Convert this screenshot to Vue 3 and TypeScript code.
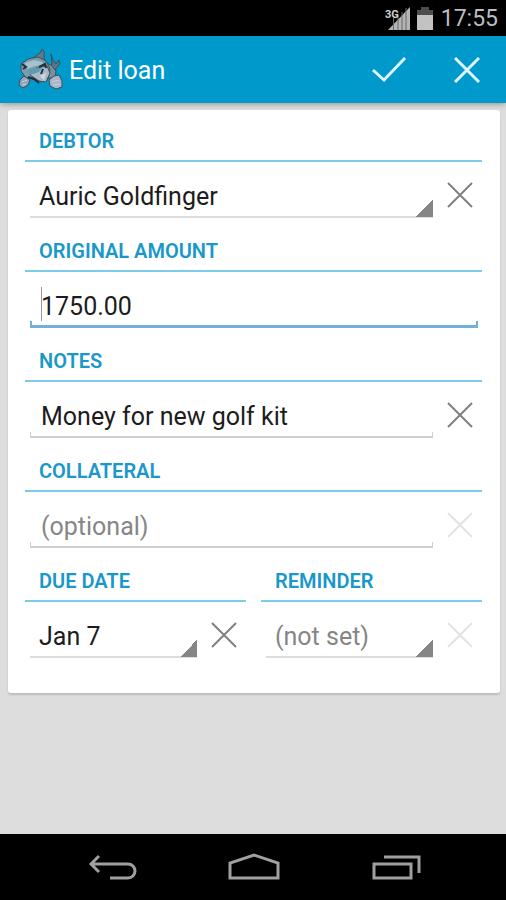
<script setup lang="ts">
import { ref } from 'vue'

const debtor = ref('Auric Goldfinger')
const amount = ref('1750.00')
const notes = ref('Money for new golf kit')
const collateral = ref('')
const dueDate = ref('Jan 7')
const reminder = ref('')
</script>

<template>
  <div class="screen">
    <div class="status-bar">
      <svg class="signal" width="26" height="26" viewBox="0 0 26 26" aria-hidden="true">
        <path d="M25 2V25H3Z" fill="#b5b5b5" />
        <path d="M8.500 12V25M13 10V25M17 7V25M21 3V25" stroke="#666" stroke-width="1" />
        <path d="M0 0H13V13H0Z" fill="#000" />
        <text x="0" y="13" class="network">3G</text>
      </svg>
      <svg class="battery" width="16" height="23" viewBox="0 0 16 23" aria-hidden="true">
        <path d="M4 0H12V3H16V8H0V3H4Z" fill="#4d4d4d" />
        <path d="M0 8H16V23H0Z" fill="#c2c2c2" />
      </svg>
      <time class="clock">17:55</time>
    </div>

    <header class="action-bar">
      <svg class="mascot" width="46" height="42" viewBox="0 0 46 42" aria-hidden="true">
        <g stroke="#3c4f5c" stroke-width="1" stroke-linejoin="round">
          <path d="M14 10 19 6 23 3 24 0 26 2 26 9 29 14 21 15Z" fill="#5f7a89" />
          <path d="M33 5 35 11 38 15 41 11 42 15 38 19 37 24 32 21 34 15Z" fill="#587686" />
          <path d="M26 13 33 16 38 22 37 29 29 29Z" fill="#7592a2" />
          <path d="M3 15 10 10 20 8 28 12 32 20 30 30 23 33 14 29 8 29 3 22Z" fill="#7d9cab" />
          <path d="M12 26 18 19 29 17 32 24 28 33 21 32Z" fill="#aab9c7" />
          <path d="M2 31 6 27 12 31 10 36 5 39 1 36Z" fill="#95a5ba" />
          <path d="M31 31 36 27 41 26 44 32 44 38 38 40 32 37Z" fill="#a8b5ca" />
        </g>
        <path d="M7 14 16 11 24 13 26 16 17 17 9 20Z" fill="#a3c2cd" />
        <path d="M9 22 16 19 25 18 21 23 12 26Z" fill="#5c9ab5" />
        <path d="M4 15 8 18 5 20M21 18 27 15 28 19M25 20 23 25M10 28 16 30 21 34" fill="none" stroke="#1f303c" stroke-width="2" />
        <path d="M22 27 28 24 26 31Z" fill="#d5d7df" />
        <path d="M4 33 9 31M4 36 8 35M34 33 41 31M35 36 42 35" stroke="#c8d0de" />
      </svg>
      <h1 class="title">Edit loan</h1>
      <button class="action" type="submit" form="loan" aria-label="Save">
        <svg width="36" height="30" viewBox="0 0 36 30" aria-hidden="true">
          <path d="M2 15 13 25 34 3" />
        </svg>
      </button>
      <button class="action" type="button" aria-label="Cancel">
        <svg width="26" height="26" viewBox="0 0 26 26" aria-hidden="true">
          <path d="M1 1 25 25M25 1 1 25" />
        </svg>
      </button>
    </header>

    <main class="content">
      <form id="loan" class="card" @submit.prevent>
        <section class="group">
          <label class="heading" for="debtor">DEBTOR</label>
          <div class="row">
            <select id="debtor" v-model="debtor" class="field spinner">
              <option>Auric Goldfinger</option>
            </select>
            <button class="clear" type="button" aria-label="Clear debtor" @click="debtor = ''">
              <svg width="26" height="26" viewBox="0 0 26 26" aria-hidden="true"><path d="M1 1 25 25M25 1 1 25" /></svg>
            </button>
          </div>
        </section>

        <section class="group">
          <label class="heading" for="amount">ORIGINAL AMOUNT</label>
          <div class="row caret">
            <input id="amount" v-model="amount" class="field edit active" type="text" inputmode="decimal" />
          </div>
        </section>

        <section class="group">
          <label class="heading" for="notes">NOTES</label>
          <div class="row">
            <input id="notes" v-model="notes" class="field edit" type="text" />
            <button class="clear" type="button" aria-label="Clear notes" @click="notes = ''">
              <svg width="26" height="26" viewBox="0 0 26 26" aria-hidden="true"><path d="M1 1 25 25M25 1 1 25" /></svg>
            </button>
          </div>
        </section>

        <section class="group">
          <label class="heading" for="collateral">COLLATERAL</label>
          <div class="row">
            <input id="collateral" v-model="collateral" class="field edit" type="text" placeholder="(optional)" />
            <button class="clear" type="button" aria-label="Clear collateral" :disabled="!collateral" @click="collateral = ''">
              <svg width="26" height="26" viewBox="0 0 26 26" aria-hidden="true"><path d="M1 1 25 25M25 1 1 25" /></svg>
            </button>
          </div>
        </section>

        <div class="pair">
          <section class="group">
            <label class="heading" for="due">DUE DATE</label>
            <div class="row">
              <select id="due" v-model="dueDate" class="field spinner">
                <option>Jan 7</option>
              </select>
              <button class="clear" type="button" aria-label="Clear due date" @click="dueDate = ''">
                <svg width="26" height="26" viewBox="0 0 26 26" aria-hidden="true"><path d="M1 1 25 25M25 1 1 25" /></svg>
              </button>
            </div>
          </section>
          <section class="group">
            <label class="heading" for="reminder">REMINDER</label>
            <div class="row">
              <select id="reminder" v-model="reminder" class="field spinner" :class="{ unset: !reminder }">
                <option value="">(not set)</option>
              </select>
              <button class="clear" type="button" aria-label="Clear reminder" :disabled="!reminder" @click="reminder = ''">
                <svg width="26" height="26" viewBox="0 0 26 26" aria-hidden="true"><path d="M1 1 25 25M25 1 1 25" /></svg>
              </button>
            </div>
          </section>
        </div>
      </form>
    </main>

    <nav class="nav-bar" aria-label="System">
      <button type="button" aria-label="Back">
        <svg width="56" height="34" viewBox="0 0 56 34" aria-hidden="true">
          <path d="M8 14H45A7 7 0 0 1 45 28H27M16 6 8 14 16 22" />
        </svg>
      </button>
      <button type="button" aria-label="Home">
        <svg width="56" height="34" viewBox="0 0 56 34" aria-hidden="true">
          <path d="M5 28V13L29 5 53 13V28Z" />
        </svg>
      </button>
      <button type="button" aria-label="Recent apps">
        <svg width="56" height="34" viewBox="0 0 56 34" aria-hidden="true">
          <path d="M7 14H44V28H7ZM17 7H52V23" />
        </svg>
      </button>
    </nav>
  </div>
</template>

<style>
body {
  margin: 0;
}
</style>

<style scoped>
.screen {
  display: flex;
  flex-direction: column;
  min-height: 100vh;
  background: #ddd;
  font-family: Roboto, "Liberation Sans", sans-serif;
}

button {
  display: flex;
  align-items: center;
  justify-content: center;
  margin: 0;
  padding: 0;
  border: 0;
  background: none;
}

svg {
  flex: none;
}

.status-bar {
  display: flex;
  align-items: center;
  justify-content: flex-end;
  height: 36px;
  padding-right: 8px;
  background: #000;
}

.signal {
  margin-right: 6px;
}

.network {
  font-size: 11px;
  font-weight: 700;
  fill: #d0d0d0;
}

.battery {
  margin-right: 8px;
}

.clock {
  padding-top: 2px;
  color: #bdbdbd;
  font-size: 23px;
  line-height: 34px;
}

.action-bar {
  display: flex;
  align-items: center;
  height: 67px;
  padding-left: 18px;
  background: #0099cc;
  box-shadow: 0 1px 6px rgba(0, 0, 0, 0.35);
}

.title {
  flex: 1;
  margin: 0 0 0 5px;
  padding-top: 2px;
  color: #fff;
  font-size: 25px;
  font-weight: 400;
  line-height: 32px;
}

.action {
  width: 78px;
  height: 67px;
}

.action path {
  fill: none;
  stroke: #dff5ff;
  stroke-width: 3;
}

.content {
  flex: 1;
  padding: 7px 6px 8px 8px;
}

.card {
  padding: 12px 18px 21px 17px;
  border-radius: 3px;
  background: #fff;
  box-shadow: 0 2px 2px rgba(0, 0, 0, 0.15);
}

.group {
  height: 110px;
}

.heading {
  display: block;
  box-sizing: border-box;
  height: 40px;
  padding-left: 14px;
  border-bottom: 2px solid #7ccbe8;
  color: #1a98ca;
  font-size: 20px;
  font-weight: 600;
  line-height: 38px;
}

.row {
  display: flex;
  align-items: center;
  padding: 10px 4px 0 5px;
}

.field {
  flex: 1;
  box-sizing: border-box;
  min-width: 0;
  height: 46px;
  margin: 0;
  border: 0;
  border-radius: 0;
  outline: none;
  background-color: transparent;
  color: #1c1c1c;
  font-family: inherit;
  font-size: 25px;
  line-height: 32px;
}

.spinner {
  appearance: none;
  padding: 4px 20px 0 9px;
  background-image:
    linear-gradient(135deg, transparent 50%, #868686 50%),
    linear-gradient(#ddd, #ddd);
  background-position: right bottom 1px, left bottom;
  background-repeat: no-repeat;
  background-size: 17px 17px, 100% 2px;
}

.unset {
  color: #868686;
}

.edit {
  --line: #d0d0d0;
  padding: 2px 12px 0 11px;
  background-image:
    linear-gradient(var(--line), var(--line)),
    linear-gradient(var(--line), var(--line)),
    linear-gradient(var(--line), var(--line));
  background-position: left bottom, left bottom, right bottom;
  background-repeat: no-repeat;
  background-size: 100% 2px, 1px 6px, 1px 6px;
}

.edit::placeholder {
  color: #868686;
  opacity: 1;
}

.active {
  --line: #72afd9;
  background-size: 100% 3px, 2px 7px, 2px 7px;
}

.caret {
  position: relative;
}

.caret::before {
  content: "";
  position: absolute;
  top: 15px;
  left: 16px;
  width: 1px;
  height: 34px;
  background: #999;
}

.clear {
  width: 44px;
  height: 44px;
  margin: 0 -4px 0 5px;
}

.clear path {
  fill: none;
  stroke: #808080;
  stroke-width: 2;
}

.clear:disabled path {
  stroke: #e3e3e3;
}

.pair {
  display: grid;
  grid-template-columns: 1fr 1fr;
  gap: 15px;
}

.nav-bar {
  display: flex;
  justify-content: center;
  height: 66px;
  background: #000;
}

.nav-bar button {
  width: 28%;
}

.nav-bar path {
  fill: none;
  stroke: #a0a0a0;
  stroke-width: 3;
}
</style>
